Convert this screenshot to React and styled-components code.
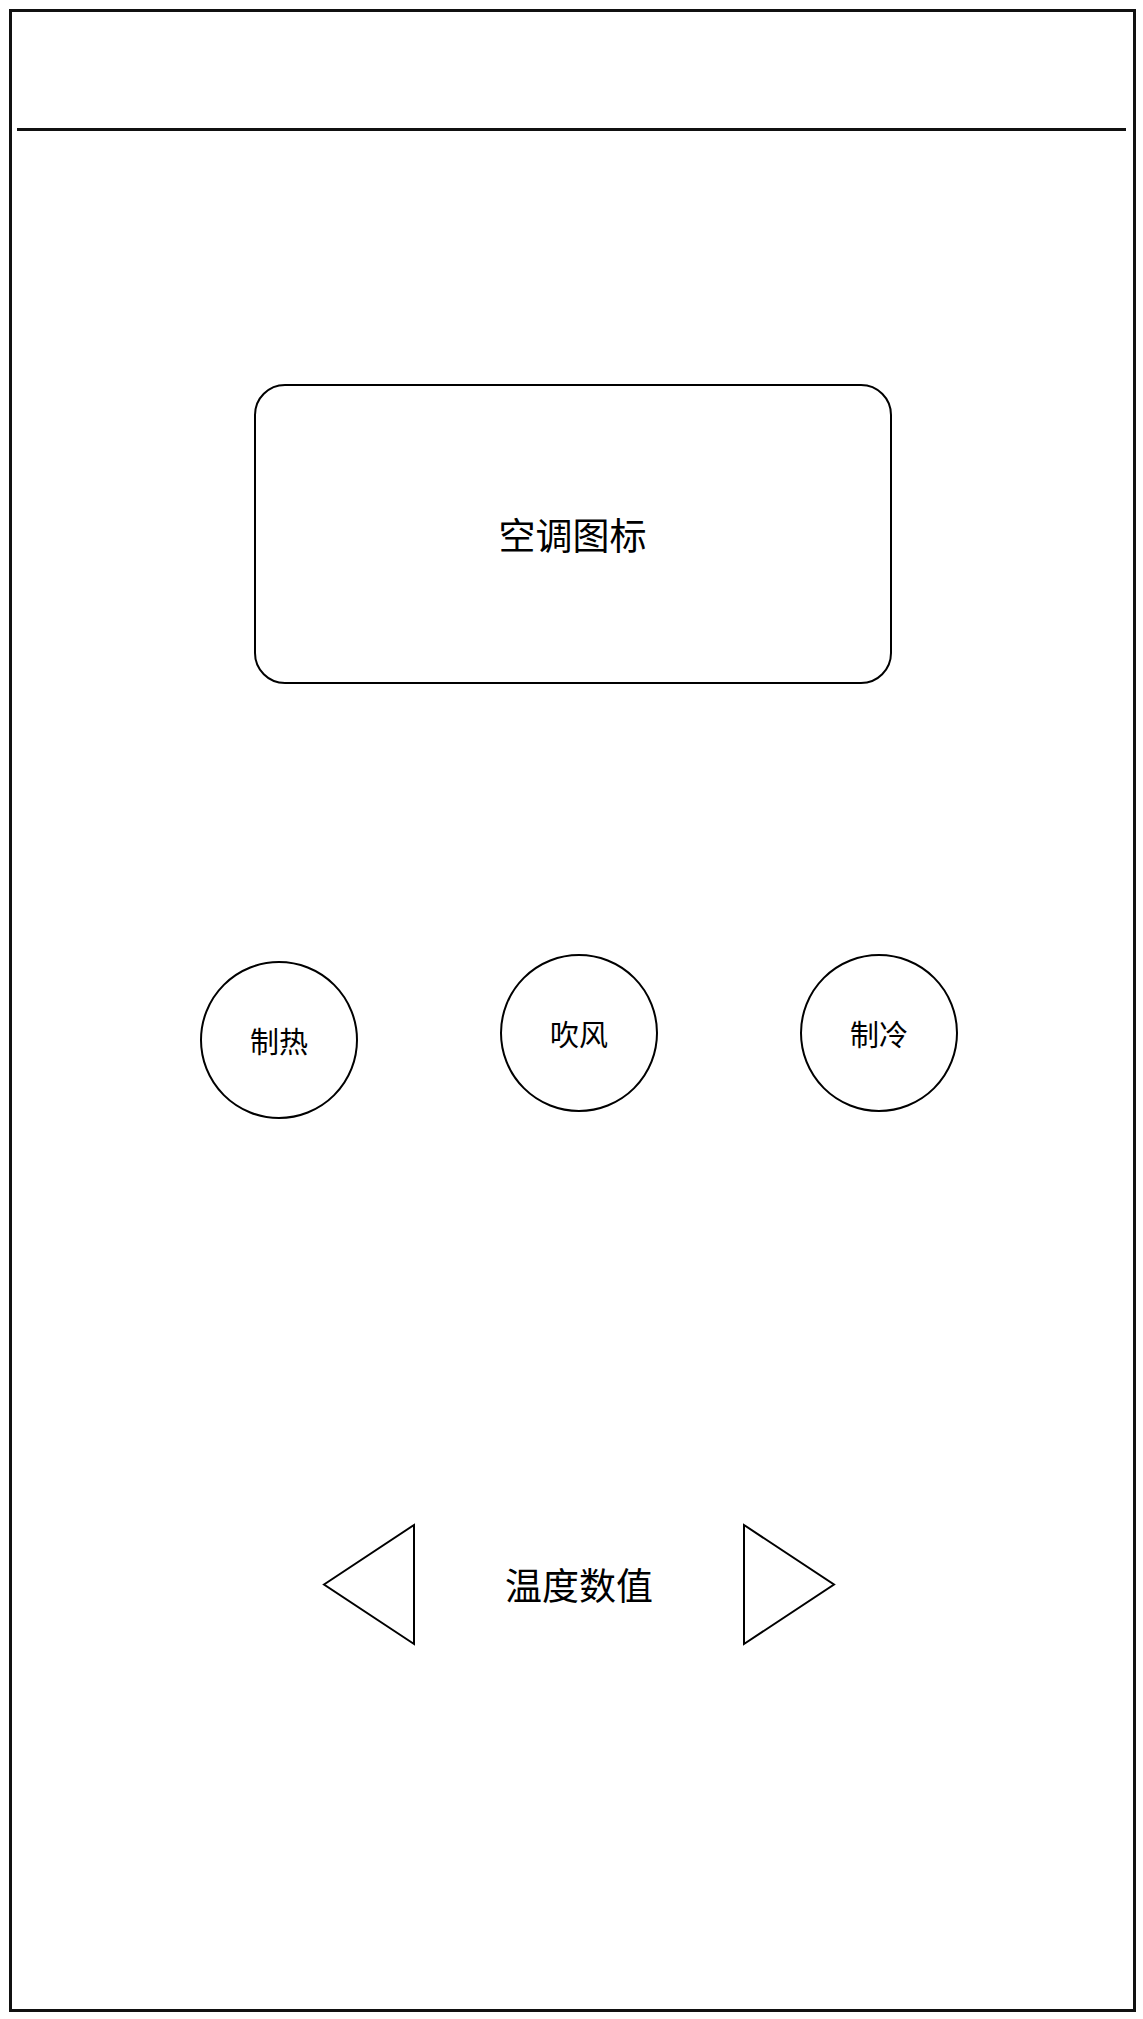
import React from 'react';
import styled, { createGlobalStyle } from 'styled-components';

const GlobalStyle = createGlobalStyle`
  html, body {
    margin: 0;
    padding: 0;
    background: #fff;
  }
  body {
    font-family: "Noto Sans CJK SC", "Noto Sans", sans-serif;
    color: #000;
  }
`;

const Frame = styled.div`
  box-sizing: border-box;
  margin: 9px;
  width: 1127px;
  height: 2003px;
  border: 3px solid #111;
  display: flex;
  flex-direction: column;
`;

const Header = styled.div`
  height: 116px;
  flex-shrink: 0;
`;

const Divider = styled.div`
  height: 3px;
  background: #111;
  margin: 0 7px 0 5px;
`;

const IconBox = styled.div`
  box-sizing: border-box;
  align-self: center;
  margin-top: 253px;
  width: 638px;
  height: 300px;
  border: 2px solid #000;
  border-radius: 31px;
  display: flex;
  align-items: center;
  justify-content: center;
  font-size: 37px;
  line-height: 1;
`;

const ModeRow = styled.div`
  display: flex;
  align-items: flex-start;
  gap: 142px;
  padding-left: 188px;
  margin-top: 270px;
`;

const ModeButton = styled.div`
  box-sizing: border-box;
  width: 158px;
  height: 158px;
  border: 2px solid #000;
  border-radius: 50%;
  display: flex;
  align-items: center;
  justify-content: center;
  font-size: 29px;
  line-height: 1;
  margin-top: ${(p) => p.$drop || 0}px;
`;

const TempRow = styled.div`
  display: flex;
  align-items: center;
  padding-left: 311px;
  margin-top: 405px;
`;

const TempValue = styled.div`
  font-size: 37px;
  line-height: 1;
  margin: 0 90px;
  white-space: nowrap;
`;

const Arrow = styled.svg`
  display: block;
  width: 92px;
  height: 121px;
  overflow: visible;
`;

const Triangle = ({ dir }) => (
  <Arrow viewBox="0 0 92 121">
    <polygon
      points={dir === 'left' ? '1,60.5 91,1 91,120' : '1,1 1,120 91,60.5'}
      fill="none"
      stroke="#000"
      strokeWidth="2"
    />
  </Arrow>
);

const App = () => {
  return (
    <>
      <GlobalStyle />
      <Frame>
        <Header />
        <Divider />
        <IconBox>空调图标</IconBox>
        <ModeRow>
          <ModeButton $drop={7}>制热</ModeButton>
          <ModeButton>吹风</ModeButton>
          <ModeButton>制冷</ModeButton>
        </ModeRow>
        <TempRow>
          <Triangle dir="left" />
          <TempValue>温度数值</TempValue>
          <Triangle dir="right" />
        </TempRow>
      </Frame>
    </>
  );
};

export default App;
